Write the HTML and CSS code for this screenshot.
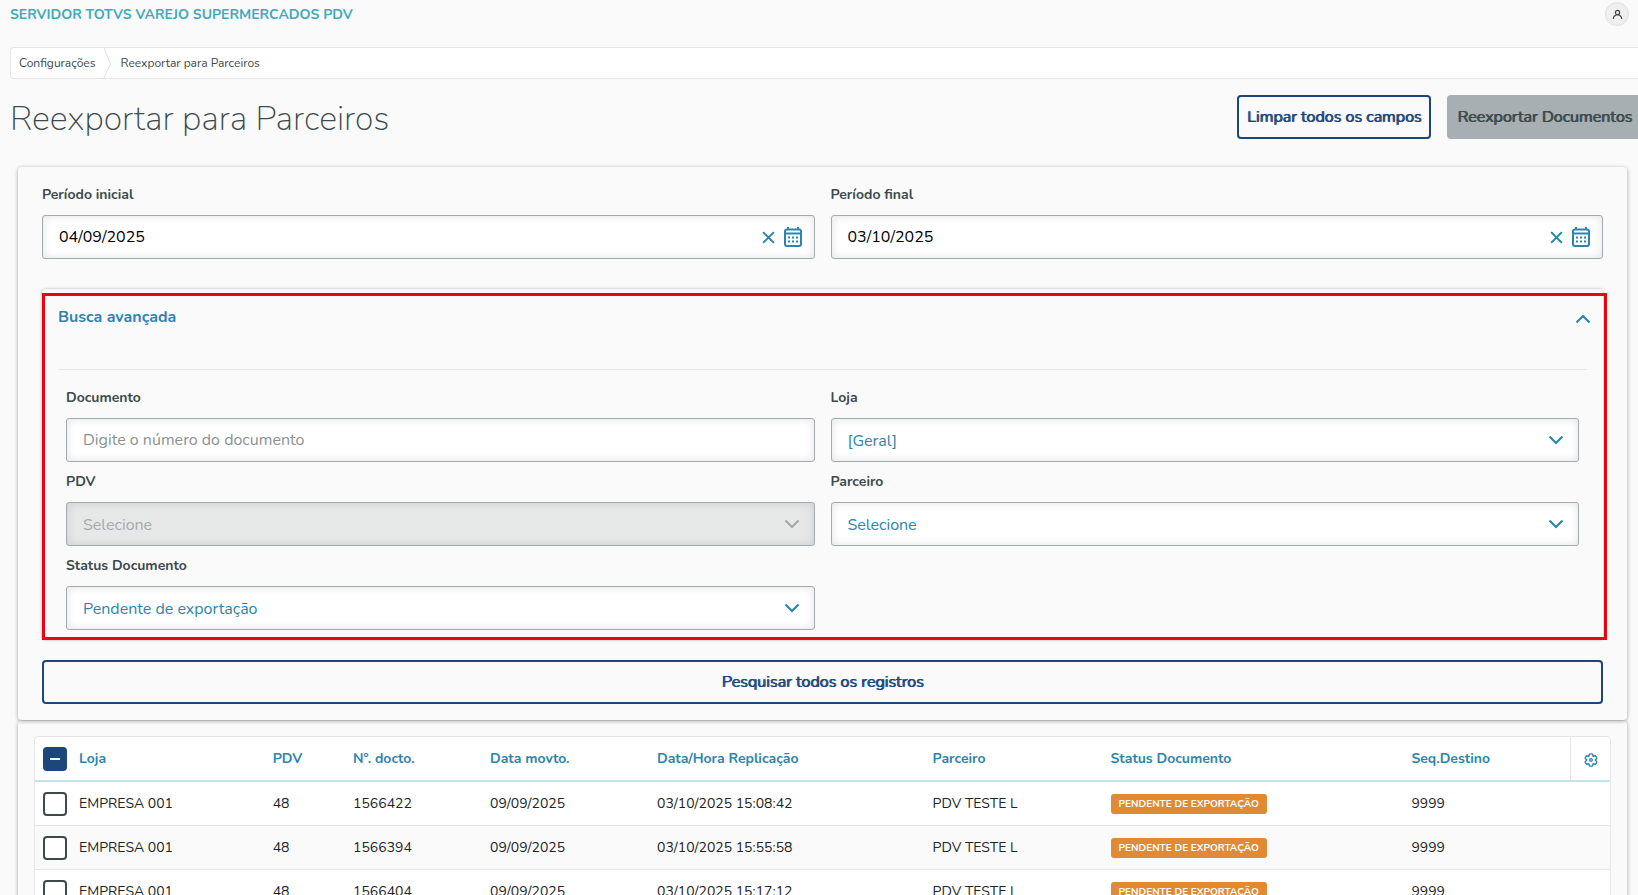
FILE: index.html
```html
<!DOCTYPE html>
<html lang="pt-BR">
<head>
<meta charset="utf-8">
<meta name="viewport" content="width=device-width, initial-scale=1">
<title>Reexportar para Parceiros</title>
<link rel="stylesheet" href="styles.css">
</head>
<body>
<svg class="sprite" aria-hidden="true">
  <symbol id="i-down" viewBox="0 0 16 16"><path d="M1.5 4.5 8 11l6.500-6.500" fill="none" stroke="currentColor" stroke-width="2.200"/></symbol>
  <symbol id="i-up" viewBox="0 0 16 16"><path d="M1.500 11.500 8 5l6.500 6.500" fill="none" stroke="currentColor" stroke-width="2.200"/></symbol>
  <symbol id="i-close" viewBox="0 0 14 14"><path d="M1.200 1.200l11.600 11.600M12.800 1.200 1.200 12.800" fill="none" stroke="currentColor" stroke-width="2.200"/></symbol>
  <symbol id="i-calendar" viewBox="0 0 20 20"><g fill="none" stroke="currentColor" stroke-width="2"><rect x="2" y="2.500" width="16" height="16.500" rx="2"/><path d="M2 6.500h16M5 0v2.500M15 0v2.500"/></g><path d="M5 9.500h2v2H5zm4 0h2v2H9zm4 0h2v2h-2zM5 13.500h2v2H5zm4 0h2v2H9zm4 0h2v2h-2z" fill="currentColor"/></symbol>
  <symbol id="i-cog" viewBox="0 0 16 16"><g fill="none" stroke="currentColor"><path stroke-width="1.600" stroke-linejoin="round" d="M6.200 1.200Q8 .700 9.800 1.200L10.450 3.750 13 3.100Q14.300 4.400 14.700 6.100L12.900 8 14.700 9.900Q14.300 11.600 13 12.900L10.450 12.250 9.800 14.800Q8 15.300 6.200 14.800L5.550 12.250 3 12.900Q1.700 11.600 1.300 9.900L3.100 8 1.300 6.100Q1.700 4.400 3 3.100L5.550 3.750Z"/><circle cx="8" cy="8" r="1.500" stroke-width="1.500"/></g></symbol>
  <symbol id="i-user" viewBox="0 0 12 12"><g fill="none" stroke="currentColor" stroke-width="1.300"><circle cx="6" cy="3.800" r="2.300"/><path d="M1.300 11c.1-2.200 1.200-3.700 2.700-4.300.7-.4 3.300-.4 4 0 1.500.6 2.600 2.100 2.700 4.300"/></g></symbol>
</svg>
<div class="app">
  <header class="topbar">
    <strong class="brand">SERVIDOR TOTVS VAREJO SUPERMERCADOS PDV</strong>
    <button class="avatar" type="button" aria-label="Usuário"><svg width="11" height="11"><use href="#i-user"/></svg></button>
  </header>
  <nav class="breadcrumb" aria-label="Navegação">
    <a class="crumb" href="#">Configurações</a>
    <svg class="crumb-sep" width="8" height="32" viewBox="0 0 8 32" aria-hidden="true"><path d="M.5 0 7.500 17 .5 32" fill="none" stroke="currentColor"/></svg>
    <span class="crumb">Reexportar para Parceiros</span>
  </nav>
  <div class="heading">
    <h1 class="title">Reexportar para Parceiros</h1>
    <div class="actions">
      <button class="btn" type="button">Limpar todos os campos</button>
      <button class="btn btn-off" type="button" disabled>Reexportar Documentos</button>
    </div>
  </div>
  <main class="main">
    <form class="panel filters">
      <div class="grid">
        <div class="field">
          <label class="label" for="ini">Período inicial</label>
          <div class="control">
            <input class="input" id="ini" type="text" value="04/09/2025">
            <div class="tools">
              <button class="icon-btn" type="button" aria-label="Limpar"><svg width="13" height="13"><use href="#i-close"/></svg></button>
              <button class="icon-btn" type="button" aria-label="Calendário"><svg width="20" height="20"><use href="#i-calendar"/></svg></button>
            </div>
          </div>
        </div>
        <div class="field">
          <label class="label" for="fim">Período final</label>
          <div class="control">
            <input class="input" id="fim" type="text" value="03/10/2025">
            <div class="tools">
              <button class="icon-btn" type="button" aria-label="Limpar"><svg width="13" height="13"><use href="#i-close"/></svg></button>
              <button class="icon-btn" type="button" aria-label="Calendário"><svg width="20" height="20"><use href="#i-calendar"/></svg></button>
            </div>
          </div>
        </div>
      </div>
      <section class="advanced">
        <div class="advanced-head">
          <h2 class="advanced-title">Busca avançada</h2>
          <button class="icon-btn" type="button" aria-label="Recolher"><svg width="16" height="16"><use href="#i-up"/></svg></button>
        </div>
        <div class="grid advanced-body">
          <div class="field">
            <label class="label" for="doc">Documento</label>
            <div class="control"><input class="input" id="doc" type="text" placeholder="Digite o número do documento"></div>
          </div>
          <div class="field">
            <label class="label" for="loja">Loja</label>
            <div class="control"><select class="input select" id="loja"><option>[Geral]</option></select><svg class="chevron" width="16" height="16"><use href="#i-down"/></svg></div>
          </div>
          <div class="field">
            <label class="label" for="pdv">PDV</label>
            <div class="control"><select class="input select" id="pdv" disabled><option>Selecione</option></select><svg class="chevron" width="16" height="16"><use href="#i-down"/></svg></div>
          </div>
          <div class="field">
            <label class="label" for="parc">Parceiro</label>
            <div class="control"><select class="input select" id="parc"><option>Selecione</option></select><svg class="chevron" width="16" height="16"><use href="#i-down"/></svg></div>
          </div>
          <div class="field">
            <label class="label" for="status">Status Documento</label>
            <div class="control"><select class="input select" id="status"><option>Pendente de exportação</option></select><svg class="chevron" width="16" height="16"><use href="#i-down"/></svg></div>
          </div>
        </div>
        <div class="highlight"></div>
      </section>
      <button class="btn btn-wide" type="button">Pesquisar todos os registros</button>
    </form>
    <section class="panel results">
      <div class="table-wrap">
      <table class="table">
        <colgroup><col class="c-check"><col class="c-loja"><col class="c-pdv"><col class="c-doc"><col class="c-mov"><col class="c-rep"><col class="c-parc"><col class="c-status"><col><col class="c-cog"></colgroup>
        <thead>
          <tr><th><input class="check check-some" type="checkbox" aria-label="Selecionar todos"></th><th>Loja</th><th>PDV</th><th>Nº. docto.</th><th>Data movto.</th><th>Data/Hora Replicação</th><th>Parceiro</th><th>Status Documento</th><th>Seq.Destino</th><th class="cog"><button class="icon-btn" type="button" aria-label="Configurar colunas"><svg width="14" height="14"><use href="#i-cog"/></svg></button></th></tr>
        </thead>
        <tbody>
          <tr><td><input class="check" type="checkbox" aria-label="Selecionar 1566422"></td><td>EMPRESA 001</td><td>48</td><td>1566422</td><td>09/09/2025</td><td>03/10/2025 15:08:42</td><td>PDV TESTE L</td><td><span class="tag">PENDENTE DE EXPORTAÇÃO</span></td><td colspan="2">9999</td></tr>
          <tr><td><input class="check" type="checkbox" aria-label="Selecionar 1566394"></td><td>EMPRESA 001</td><td>48</td><td>1566394</td><td>09/09/2025</td><td>03/10/2025 15:55:58</td><td>PDV TESTE L</td><td><span class="tag">PENDENTE DE EXPORTAÇÃO</span></td><td colspan="2">9999</td></tr>
          <tr><td><input class="check" type="checkbox" aria-label="Selecionar 1566404"></td><td>EMPRESA 001</td><td>48</td><td>1566404</td><td>09/09/2025</td><td>03/10/2025 15:17:12</td><td>PDV TESTE L</td><td><span class="tag">PENDENTE DE EXPORTAÇÃO</span></td><td colspan="2">9999</td></tr>
        </tbody>
      </table>
      </div>
    </section>
  </main>
</div>
</body>
</html>
```
FILE: styles.css
```css
:root {
  --page: #fafafa;
  --blue: #2c85b0;
  --navy: #1c477c;
  --ink: #3c4a4d;
  --line: #e5e6e6;
  --field: #a3abae;
}
* { box-sizing: border-box; }
body {
  margin: 0;
  background: var(--page);
  color: var(--ink);
  font-family: Nunito, Lato, "Open Sans", sans-serif;
  font-size: 14px;
}
button, input, select { font: inherit; color: inherit; }
.sprite { position: absolute; width: 0; height: 0; }
.app { height: 100vh; overflow: hidden; }

.topbar {
  display: flex;
  align-items: center;
  justify-content: space-between;
  height: 28px;
  padding: 0 9px 0 10px;
}
.brand { color: #3eaabb; font-size: 14px; }
.avatar {
  display: grid;
  place-items: center;
  width: 24px;
  height: 24px;
  padding: 0;
  border: 0;
  border-radius: 50%;
  background: #f0f0f0;
  box-shadow: inset 0 0 3px rgba(0, 0, 0, .12);
}

.breadcrumb {
  display: flex;
  align-items: center;
  height: 32px;
  margin: 19px 0 0 10px;
  background: #fff;
  border: 1px solid var(--line);
  border-right: 0;
  border-radius: 4px 0 0 4px;
  font-size: 12px;
}
.crumb { padding: 0 8px; color: var(--ink); text-decoration: none; }
.crumb-sep { color: #dfe2e2; }
.crumb-sep + .crumb { padding-left: 9px; }

.heading {
  display: flex;
  justify-content: space-between;
  margin: 16px 0 24px 10px;
}
.title {
  margin: 0;
  font-size: 34px;
  font-weight: 250;
  line-height: 48px;
}
.actions { display: flex; gap: 16px; margin-right: -4px; }
.btn {
  height: 44px;
  padding: 0 8px;
  border: 2px solid var(--navy);
  border-radius: 4px;
  background: transparent;
  color: var(--navy);
  font-size: 16px;
  font-weight: 400;
  text-shadow: 1px 0 currentColor;
  white-space: nowrap;
}
.btn-off { background: #a8afb2; border-color: #a8afb2; color: var(--ink); }
.btn-wide { width: 100%; }

.main { padding: 0 11px 0 18px; }
.panel {
  border-radius: 4px;
  background: var(--page);
  box-shadow: 0 1px 4px rgba(0, 0, 0, .35);
}
.filters { position: relative; z-index: 1; padding: 16px 24px; }
.grid { display: grid; grid-template-columns: 1fr 1fr; column-gap: 16px; }
.label {
  display: block;
  height: 32px;
  padding-top: 2px;
  line-height: 20px;
  font-weight: 700;
}
.control { position: relative; }
.input {
  display: block;
  width: 100%;
  height: 44px;
  padding: 0 16px;
  border: 1px solid var(--field);
  border-radius: 3px;
  background: #fff;
  box-shadow: inset 0 0 8px rgba(0, 0, 0, .12);
  color: #000;
  font-size: 16px;
}
.input::placeholder { color: #8b9193; opacity: 1; }
.select { appearance: none; padding-top: 2px; color: var(--blue); }
.select:disabled { background: #e6e8e8; color: #a3abae; opacity: 1; }
.chevron {
  position: absolute;
  top: 14px;
  right: 15px;
  color: var(--blue);
  pointer-events: none;
}
.select:disabled + .chevron { color: #a3abae; }
.tools {
  position: absolute;
  top: 0;
  right: 12px;
  display: flex;
  align-items: center;
  gap: 8px;
  height: 44px;
}
.icon-btn {
  display: inline-grid;
  padding: 0;
  border: 0;
  background: none;
  color: var(--blue);
  vertical-align: middle;
}

.advanced {
  position: relative;
  margin: 30px 0 20px;
  padding: 16px 16px 10px;
  border-radius: 4px;
  box-shadow: 0 0 3px rgba(0, 0, 0, .3);
}
.advanced-head {
  display: flex;
  justify-content: space-between;
  align-items: flex-start;
  height: 65px;
  border-bottom: 1px solid var(--line);
}
.advanced-head .icon-btn { margin: 6px -4px 0 0; }
.advanced-title { margin: 0; color: var(--blue); font-size: 16px; line-height: 24px; }
.advanced-body { padding: 16px 8px 0; row-gap: 8px; }
.highlight {
  position: absolute;
  inset: 4px -4px 0 0;
  border: 3px solid #ee0011;
  pointer-events: none;
}

.results { margin-top: 1px; padding: 15px 16px; }
.table-wrap { border: 1px solid var(--line); border-radius: 4px; background: #fff; overflow: hidden; }
.table { width: 100%; table-layout: fixed; border-collapse: separate; border-spacing: 0; color: #1d2426; }
.table th, .table td { height: 44px; padding: 0 8px; text-align: left; white-space: nowrap; border-bottom: 1px solid var(--line); }
.table th { height: 45px; color: var(--blue); border-bottom: 2px solid #c3e3ec; }
.table tbody tr:nth-child(even) { background: #fafafa; }
.table .cog { padding: 0; text-align: center; border-left: 1px solid var(--line); }
.c-check { width: 36px; }
.c-loja { width: 12.3%; }
.c-pdv { width: 5.1%; }
.c-doc { width: 8.7%; }
.c-mov { width: 10.6%; }
.c-rep { width: 17.5%; }
.c-parc { width: 11.3%; }
.c-status { width: 19.1%; }
.c-cog { width: 40px; }
.check {
  appearance: none;
  display: grid;
  place-items: center;
  width: 24px;
  height: 24px;
  margin: 0;
  border: 2px solid #3c4a4d;
  border-radius: 4px;
  background: #fff;
}
.check-some { background: var(--navy); border-color: var(--navy); }
.check-some::before { content: ""; width: 10px; height: 2px; background: #fff; }
.tag {
  display: inline-block;
  padding: 0 8px;
  border-radius: 3px;
  background: #e28a33;
  color: #fff;
  font-size: 10px;
  font-weight: 700;
  line-height: 20px;
  vertical-align: middle;
}
```
